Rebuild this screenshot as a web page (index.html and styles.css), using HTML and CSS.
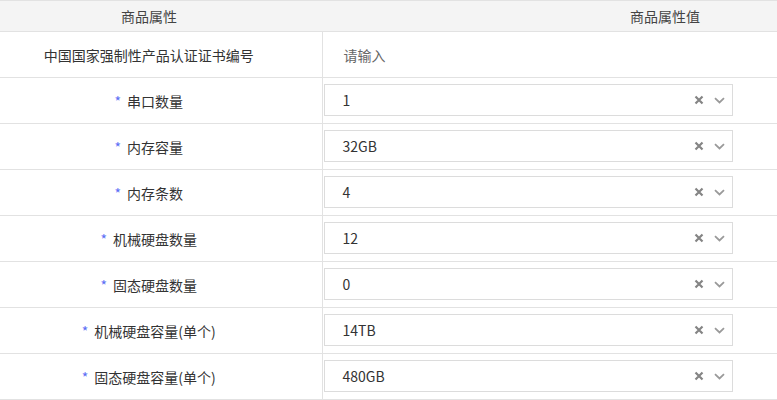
FILE: index.html
```html
<!DOCTYPE html>
<html lang="zh-CN">
  <head>
    <meta charset="utf-8" />
    <title>商品属性</title>
    <link rel="stylesheet" href="styles.css">
  </head>
  <body>
    <div class="table-wrap">
    <table class="attr-table">
      <thead>
        <tr>
          <th class="col-name">商品属性</th>
          <th class="col-value">商品属性值</th>
        </tr>
      </thead>
      <tbody>
        <tr>
          <td class="col-name">中国国家强制性产品认证证书编号</td>
          <td class="col-value"><div class="plain-input">请输入</div></td>
        </tr>
        <tr>
          <td class="col-name"><span class="req">*</span>串口数量</td>
          <td class="col-value">
            <div class="select"><span class="select-text">1</span>
              <span class="select-icons">
                <svg class="ico-clear" width="10" height="10" viewBox="0 0 10 10"><path d="M1.5 1.5L8.5 8.5M8.5 1.5L1.5 8.5" stroke="#858585" stroke-width="2.2"/></svg>
                <svg class="ico-arrow" width="11" height="7" viewBox="0 0 11 7"><path d="M1 1.2L5.5 5.5L10 1.2" stroke="#9a9a9a" stroke-width="1.8" fill="none"/></svg>
              </span>
            </div>
          </td>
        </tr>
        <tr>
          <td class="col-name"><span class="req">*</span>内存容量</td>
          <td class="col-value">
            <div class="select"><span class="select-text">32GB</span>
              <span class="select-icons">
                <svg class="ico-clear" width="10" height="10" viewBox="0 0 10 10"><path d="M1.5 1.5L8.5 8.5M8.5 1.5L1.5 8.5" stroke="#858585" stroke-width="2.2"/></svg>
                <svg class="ico-arrow" width="11" height="7" viewBox="0 0 11 7"><path d="M1 1.2L5.5 5.5L10 1.2" stroke="#9a9a9a" stroke-width="1.8" fill="none"/></svg>
              </span>
            </div>
          </td>
        </tr>
        <tr>
          <td class="col-name"><span class="req">*</span>内存条数</td>
          <td class="col-value">
            <div class="select"><span class="select-text">4</span>
              <span class="select-icons">
                <svg class="ico-clear" width="10" height="10" viewBox="0 0 10 10"><path d="M1.5 1.5L8.5 8.5M8.5 1.5L1.5 8.5" stroke="#858585" stroke-width="2.2"/></svg>
                <svg class="ico-arrow" width="11" height="7" viewBox="0 0 11 7"><path d="M1 1.2L5.5 5.5L10 1.2" stroke="#9a9a9a" stroke-width="1.8" fill="none"/></svg>
              </span>
            </div>
          </td>
        </tr>
        <tr>
          <td class="col-name"><span class="req">*</span>机械硬盘数量</td>
          <td class="col-value">
            <div class="select"><span class="select-text">12</span>
              <span class="select-icons">
                <svg class="ico-clear" width="10" height="10" viewBox="0 0 10 10"><path d="M1.5 1.5L8.5 8.5M8.5 1.5L1.5 8.5" stroke="#858585" stroke-width="2.2"/></svg>
                <svg class="ico-arrow" width="11" height="7" viewBox="0 0 11 7"><path d="M1 1.2L5.5 5.5L10 1.2" stroke="#9a9a9a" stroke-width="1.8" fill="none"/></svg>
              </span>
            </div>
          </td>
        </tr>
        <tr>
          <td class="col-name"><span class="req">*</span>固态硬盘数量</td>
          <td class="col-value">
            <div class="select"><span class="select-text">0</span>
              <span class="select-icons">
                <svg class="ico-clear" width="10" height="10" viewBox="0 0 10 10"><path d="M1.5 1.5L8.5 8.5M8.5 1.5L1.5 8.5" stroke="#858585" stroke-width="2.2"/></svg>
                <svg class="ico-arrow" width="11" height="7" viewBox="0 0 11 7"><path d="M1 1.2L5.5 5.5L10 1.2" stroke="#9a9a9a" stroke-width="1.8" fill="none"/></svg>
              </span>
            </div>
          </td>
        </tr>
        <tr>
          <td class="col-name"><span class="req">*</span>机械硬盘容量(单个)</td>
          <td class="col-value">
            <div class="select"><span class="select-text">14TB</span>
              <span class="select-icons">
                <svg class="ico-clear" width="10" height="10" viewBox="0 0 10 10"><path d="M1.5 1.5L8.5 8.5M8.5 1.5L1.5 8.5" stroke="#858585" stroke-width="2.2"/></svg>
                <svg class="ico-arrow" width="11" height="7" viewBox="0 0 11 7"><path d="M1 1.2L5.5 5.5L10 1.2" stroke="#9a9a9a" stroke-width="1.8" fill="none"/></svg>
              </span>
            </div>
          </td>
        </tr>
        <tr>
          <td class="col-name"><span class="req">*</span>固态硬盘容量(单个)</td>
          <td class="col-value">
            <div class="select"><span class="select-text">480GB</span>
              <span class="select-icons">
                <svg class="ico-clear" width="10" height="10" viewBox="0 0 10 10"><path d="M1.5 1.5L8.5 8.5M8.5 1.5L1.5 8.5" stroke="#858585" stroke-width="2.2"/></svg>
                <svg class="ico-arrow" width="11" height="7" viewBox="0 0 11 7"><path d="M1 1.2L5.5 5.5L10 1.2" stroke="#9a9a9a" stroke-width="1.8" fill="none"/></svg>
              </span>
            </div>
          </td>
        </tr>
      </tbody>
    </table>
    </div>
  </body>
</html>
```

FILE: styles.css
```css
body {
  margin: 0;
  background-color: #fff;
  font-family: "Noto Sans CJK SC", "Noto Sans", sans-serif;
  font-size: 14px;
  color: #333;
  overflow: hidden;
}
.table-wrap {
  width: 100%;
  overflow: hidden;
}
.attr-table {
  width: 1008px;
  border-collapse: collapse;
  table-layout: fixed;
}
.attr-table th {
  height: 30px;
  padding: 0;
  background-color: #f4f4f4;
  border-top: 1px solid #e2e2e2;
  border-bottom: 1px solid #e2e2e2;
  font-weight: normal;
  color: #444;
  line-height: 30px;
}
.attr-table td {
  height: 45px;
  padding: 0;
  border-bottom: 1px solid #e2e2e2;
}
.attr-table .col-name {
  width: 298px;
  padding-right: 24px;
  text-align: center;
}
.attr-table td.col-value {
  border-left: 1px solid #e2e2e2;
  padding-left: 1px;
}
.req {
  color: #5b6ef5;
  margin-right: 6px;
}
.plain-input {
  padding-left: 20px;
  color: #666;
}
.select {
  width: 389px;
  height: 30px;
  margin-top: -1px;
  border: 1px solid #dcdcdc;
  display: flex;
  align-items: center;
  justify-content: space-between;
  padding-left: 18px;
}
.select-icons {
  display: flex;
  align-items: center;
  gap: 10px;
  padding-right: 7px;
}
.ico-clear {
  display: block;
}
.ico-arrow {
  display: block;
}
```
